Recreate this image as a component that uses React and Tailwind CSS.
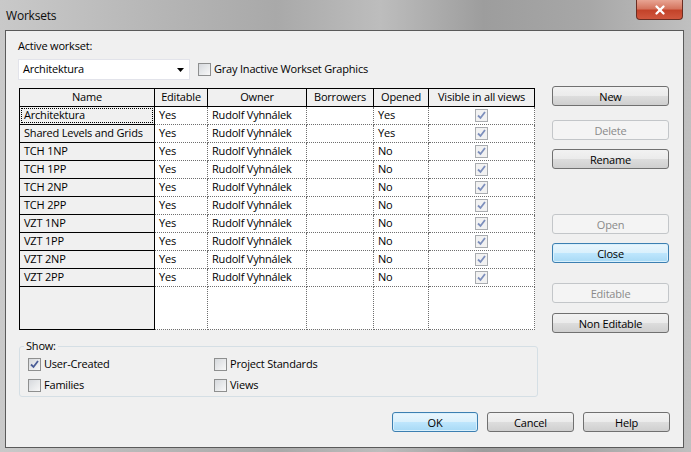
import { X } from "lucide-react";

const ROWS = [
  ["Architektura", "Yes", "Rudolf Vyhnálek", "", "Yes"],
  ["Shared Levels and Grids", "Yes", "Rudolf Vyhnálek", "", "Yes"],
  ["TCH 1NP", "Yes", "Rudolf Vyhnálek", "", "No"],
  ["TCH 1PP", "Yes", "Rudolf Vyhnálek", "", "No"],
  ["TCH 2NP", "Yes", "Rudolf Vyhnálek", "", "No"],
  ["TCH 2PP", "Yes", "Rudolf Vyhnálek", "", "No"],
  ["VZT 1NP", "Yes", "Rudolf Vyhnálek", "", "No"],
  ["VZT 1PP", "Yes", "Rudolf Vyhnálek", "", "No"],
  ["VZT 2NP", "Yes", "Rudolf Vyhnálek", "", "No"],
  ["VZT 2PP", "Yes", "Rudolf Vyhnálek", "", "No"],
];

const COLS = [
  { label: "Name", w: "w-[136px]" },
  { label: "Editable", w: "w-[53px]" },
  { label: "Owner", w: "w-[99px]" },
  { label: "Borrowers", w: "w-[67px]" },
  { label: "Opened", w: "w-[55px]" },
  { label: "Visible in all views", w: "w-[106px]" },
];

const Check = ({ checked, muted }) => (
  <span
    className={`flex h-[13px] w-[13px] shrink-0 items-center justify-center border ${
      muted ? "border-[#a9acb0] bg-[#f2f2f2]" : "border-[#8e8f8f] bg-[linear-gradient(135deg,#d6d9dd,#f8f8f8)]"
    }`}
  >
    {checked && (
      <svg width="9" height="9" viewBox="0 0 9 9">
        <path
          d="M1 4.5 L3.5 7 L8 1"
          fill="none"
          stroke={muted ? "#7d8fbc" : "#4a5d97"}
          strokeWidth="1.8"
        />
      </svg>
    )}
  </span>
);

const WinButton = ({ children, width = "w-[117px]", disabled, primary }) => {
  let tone =
    "border-[#707070] text-black bg-[linear-gradient(#f2f2f2_0%,#ebebeb_50%,#dddddd_51%,#cfcfcf_100%)]";
  if (disabled) tone = "border-[#c3c6c9] text-[#8a8a8a] bg-[#f4f4f4]";
  if (primary)
    tone =
      "border-[#3c7fb1] text-black bg-[linear-gradient(#eaf6fd_0%,#d9f0fc_50%,#bee6fd_51%,#a7d9f5_100%)] shadow-[inset_0_0_0_1px_#d9f0fc]";
  return (
    <button
      className={`flex h-[20px] ${width} items-center justify-center rounded-[3px] border leading-none ${tone}`}
    >
      {children}
    </button>
  );
};

export default function App() {
  return (
    <div className="flex h-[452px] w-[691px] flex-col overflow-hidden whitespace-nowrap bg-[linear-gradient(90deg,#c9c9c9_0%,#b4b4b4_25%,#a9a9a9_40%,#bdbdbd_55%,#9d9d9d_70%,#a7a7a7_85%,#c0c0c0_100%)] font-['Open_Sans',sans-serif] text-[11px] tracking-[-0.2px] text-black">
      {/* title bar */}
      <div className="flex h-[30px] shrink-0 items-start">
        <span className="ml-[6px] mt-[8px] text-[12px] leading-[16px] text-[#0c0c0c]">Worksets</span>
        <div className="ml-auto mr-[8px] flex h-[20px] w-[47px] items-center justify-center rounded-b-[4px] border border-t-0 border-[#6b2d22] bg-[linear-gradient(#e8a493_0%,#d5755f_45%,#c3432a_55%,#d0573e_100%)]">
          <X size={14} strokeWidth={4} color="#ffffff" />
        </div>
      </div>

      {/* client area */}
      <div className="mb-[4px] ml-[5px] mr-[7px] flex flex-1 flex-col border border-[#5a5a5a] bg-[#f0f0f0] pl-[12px] pr-[13px] pt-[7px]">
        <div className="leading-[16px]">Active workset:</div>
        <div className="mt-[5px] flex items-center">
          <div className="flex h-[21px] w-[172px] items-center border border-[#e2e3ea] bg-white pl-[4px] pr-[5px]">
            <span className="flex-1">Architektura</span>
            <svg width="7" height="4" viewBox="0 0 7 4">
              <path d="M0 0 H7 L3.5 4 Z" fill="#000" />
            </svg>
          </div>
          <div className="ml-[8px] flex items-center gap-[3px]">
            <Check />
            <span>Gray Inactive Workset Graphics</span>
          </div>
        </div>

        <div className="mt-[6px] flex items-start">
          <div className="flex w-[520px] flex-col">
            {/* table */}
            <div className="ml-px mt-[2px] flex w-[517px] flex-col">
              <div className="flex h-[19px]">
                {COLS.map((c, i) => (
                  <div
                    key={c.label}
                    className={`${c.w} flex items-center justify-center border-y border-r border-black bg-[#f0f0f0] ${
                      i === 0 ? "border-l" : ""
                    }`}
                  >
                    {c.label}
                  </div>
                ))}
              </div>
              {ROWS.map((r, ri) => (
                <div key={r[0]} className="flex h-[18px]">
                  <div className="w-[136px] border-b border-l border-r border-black bg-[#f0f0f0] p-px">
                    <div
                      className={`flex h-full items-center pl-[2px] ${
                        ri === 0 ? "border border-dotted border-black" : "border border-transparent"
                      }`}
                    >
                      {r[0]}
                    </div>
                  </div>
                  {r.slice(1).map((v, ci) => (
                    <div
                      key={ci}
                      className={`${COLS[ci + 1].w} flex items-center border-b border-r border-dotted border-[#6e6e6e] bg-white pl-[4px]`}
                    >
                      {v}
                    </div>
                  ))}
                  <div className="flex w-[106px] items-center justify-center border-b border-r border-dotted border-[#6e6e6e] bg-white">
                    <Check checked muted />
                  </div>
                </div>
              ))}
              <div className="flex h-[43px]">
                <div className="w-[136px] border-b border-l border-r border-black bg-[#f0f0f0]" />
                {COLS.slice(1).map((c) => (
                  <div key={c.label} className={`${c.w} border-b border-r border-dotted border-[#6e6e6e] bg-white`} />
                ))}
              </div>
            </div>

            {/* show group */}
            <div className="relative ml-px mt-[16px] h-[51px] w-[519px] rounded-[3px] border border-[#d5dfe5]">
              <span className="absolute -top-[9px] left-[4px] bg-[#f0f0f0] px-[2px] leading-[16px]">Show:</span>
              <div className="grid grid-cols-[186px_1fr] gap-y-[5px] pl-[8px] pt-[9px] leading-[16px]">
                <div className="flex items-center gap-[3px]">
                  <Check checked />
                  <span>User-Created</span>
                </div>
                <div className="flex items-center gap-[3px]">
                  <Check />
                  <span>Project Standards</span>
                </div>
                <div className="flex items-center gap-[3px]">
                  <Check />
                  <span>Families</span>
                </div>
                <div className="flex items-center gap-[3px]">
                  <Check />
                  <span>Views</span>
                </div>
              </div>
            </div>
          </div>

          {/* side buttons */}
          <div className="ml-[14px] flex flex-col">
            <WinButton>New</WinButton>
            <div className="mt-[14px]">
              <WinButton disabled>Delete</WinButton>
            </div>
            <div className="mt-[9px]">
              <WinButton>Rename</WinButton>
            </div>
            <div className="mt-[45px]">
              <WinButton disabled>Open</WinButton>
            </div>
            <div className="mt-[9px]">
              <WinButton primary>Close</WinButton>
            </div>
            <div className="mt-[20px]">
              <WinButton disabled>Editable</WinButton>
            </div>
            <div className="mt-[10px]">
              <WinButton>Non Editable</WinButton>
            </div>
          </div>
        </div>

        <div className="mt-[15px] flex justify-end gap-[9px]">
          <WinButton width="w-[86px]" primary>
            OK
          </WinButton>
          <WinButton width="w-[87px]">Cancel</WinButton>
          <WinButton width="w-[87px]">Help</WinButton>
        </div>
      </div>
    </div>
  );
}
